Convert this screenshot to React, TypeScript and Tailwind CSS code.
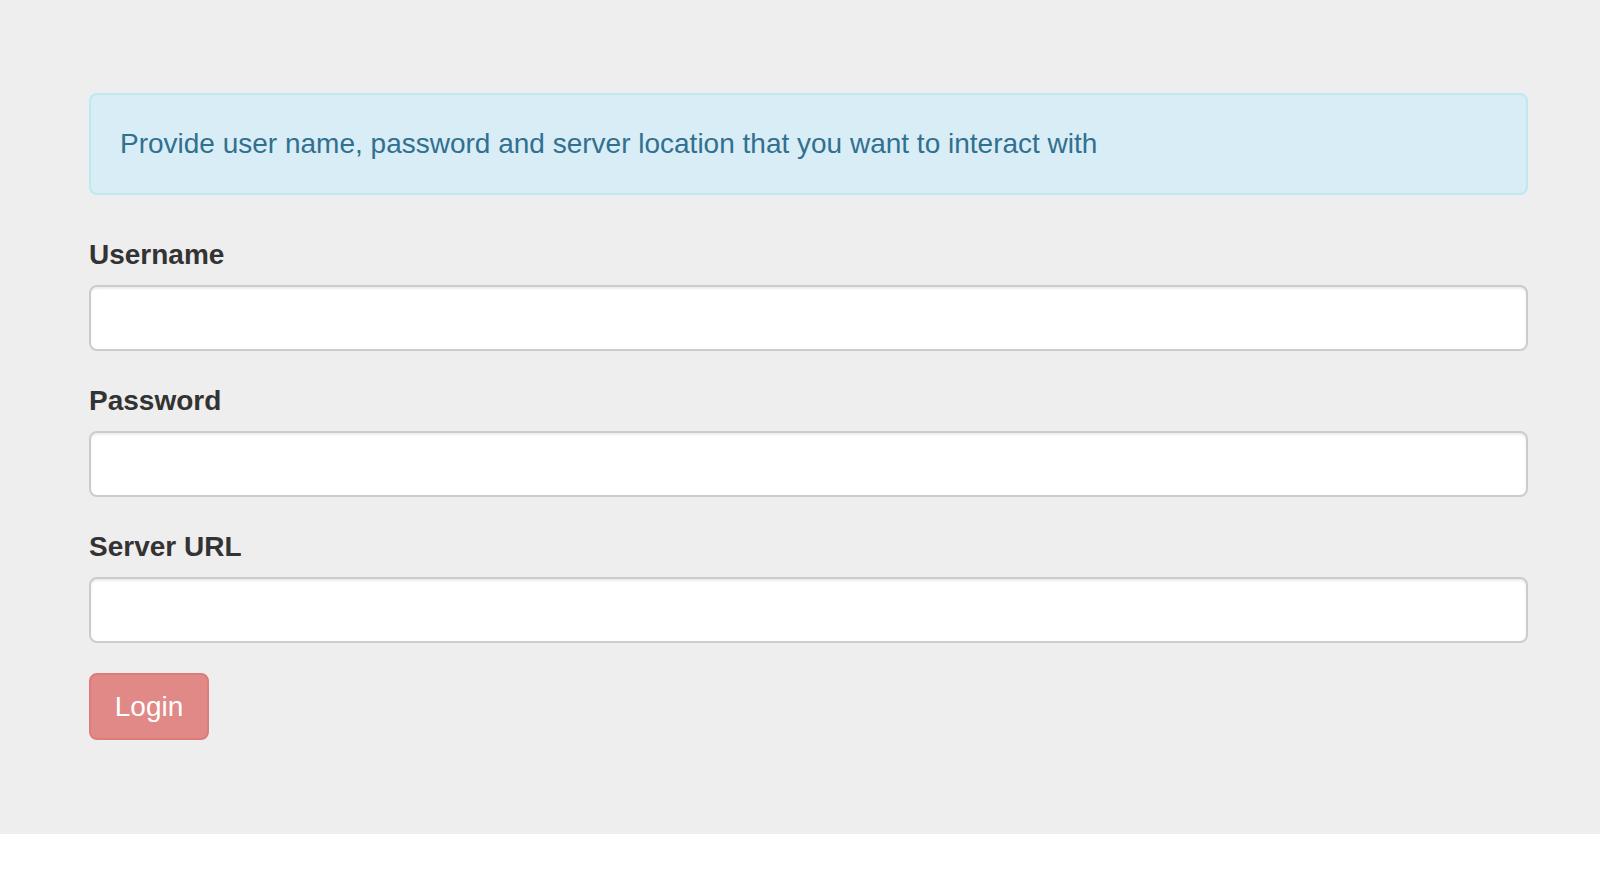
import React from "react";

export default function App() {
  const fields = ["Username", "Password", "Server URL"];
  return (
    <div className="w-full bg-white" style={{ fontFamily: '"Liberation Sans", Arial, sans-serif' }}>
      <div className="bg-[#eeeeee] pt-[93px] pb-[94px] pl-[89px] pr-[72px]">
        <div className="rounded-[8px] border-2 border-[#bce8f1] bg-[#d9edf7] px-[29px] py-[29px] text-[28px] leading-[40px] text-[#31708f]">
          Provide user name, password and server location that you want to interact with
        </div>
        <div className="mt-[41px]">
          {fields.map((f, i) => (
            <div key={f} className="mb-[31px]">
              <label className="mb-[11px] block h-[38px] text-[28px] font-bold leading-[38px] text-[#333333]">{f}</label>
              <input
                type={i === 1 ? "password" : "text"}
                className="block h-[66px] w-full rounded-[8px] border-2 border-[#cccccc] bg-white px-[24px] text-[28px] text-[#555] shadow-[inset_0_2px_2px_rgba(0,0,0,0.075)] outline-none"
              />
            </div>
          ))}
          <button
            disabled
            className="-mt-px h-[67px] w-[120px] rounded-[8px] border-2 border-[#dd7c79] bg-[#e08987] text-[28px] leading-[40px] text-white"
          >
            Login
          </button>
        </div>
      </div>
    </div>
  );
}
